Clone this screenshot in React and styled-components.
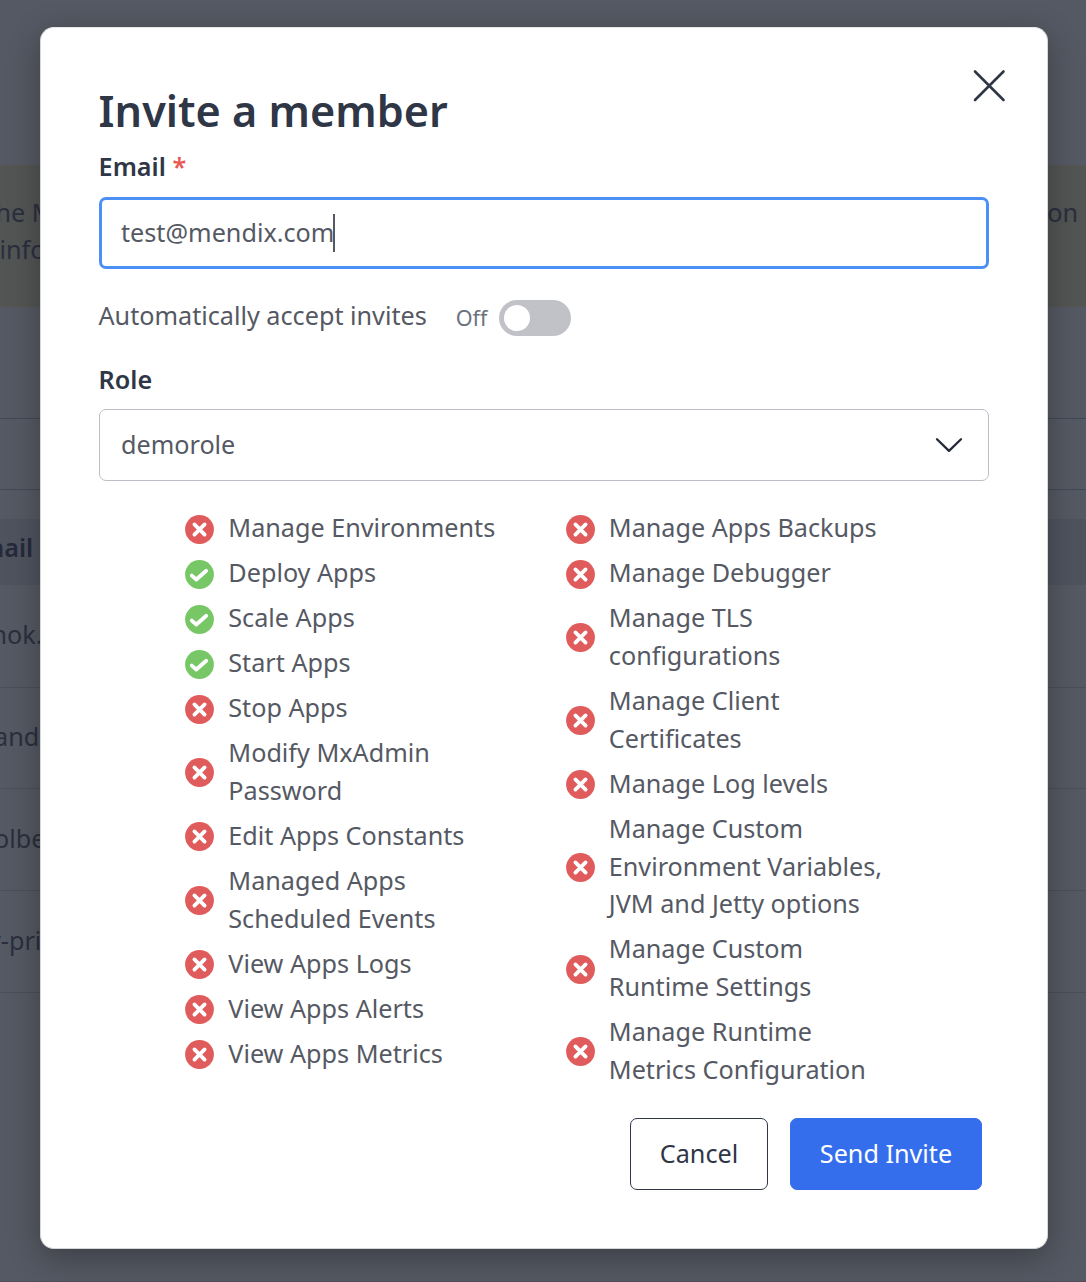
import React from "react";
import styled, { createGlobalStyle } from "styled-components";

const Global = createGlobalStyle`
  *, *::before, *::after { box-sizing: border-box; }
  html, body { margin: 0; padding: 0; background: #555963; }
  body {
    font-family: "Noto Sans", "Open Sans", sans-serif;
    font-size: 25.2px;
    line-height: 37.8px;
    color: #555963;
    overflow: hidden;
  }
`;

const Screen = styled.div`
  position: relative;
  height: 1282px;
  overflow: hidden;
`;

/* Dimmed page behind the dialog */
const Page = styled.div`
  display: flex;
  flex-direction: column;
  height: 100%;
  padding-top: 165px;
  background: #555963;
  border-bottom: 1px solid #524e5c;
  color: #2a2f3e;
  white-space: nowrap;
`;

const Notice = styled.div`
  height: 142px;
  padding-top: 28px;
  background: #535454;
  border-top: 1px solid #56574f;
  border-bottom: 1px solid #56574f;
`;

const NoticeLine = styled.div`
  display: flex;
  justify-content: space-between;
  height: 37px;
  padding-right: 8px;
  margin-left: ${(p) => p.$shift}px;
`;

const FilterBar = styled.div`
  height: 72px;
  margin: 111px 0 29px;
  border-top: 1px solid #434857;
  border-bottom: 1px solid #434857;
`;

const HeadRow = styled.div`
  display: flex;
  align-items: center;
  height: 66px;
  margin-bottom: 1px;
  padding-bottom: 9px;
  background: #4f535e;
  color: #252a3b;
  font-weight: 600;
`;

const Row = styled.div`
  display: flex;
  align-items: center;
  height: 101.7px;
  padding-bottom: 2px;
  border-bottom: 1px solid #4b4f5a;
`;

const Cell = styled.span`
  margin-left: ${(p) => p.$shift}px;
`;

const Dialog = styled.section`
  position: absolute;
  top: 27px;
  left: 40px;
  width: 1008px;
  height: 1222px;
  padding: 54px 58px 0;
  background: #fff;
  border: 1px solid #d5d6da;
  border-top-color: #e6e7e9;
  border-radius: 14px;
  box-shadow: 0 9px 32px rgba(0, 0, 0, 0.3);
`;

const CloseButton = styled.button`
  position: absolute;
  top: 40px;
  right: 40px;
  width: 36px;
  height: 36px;
  padding: 0;
  border: 0;
  background: none;
  svg { display: block; }
`;

const Title = styled.h1`
  margin: 0 0 8px -0.4px;
  height: 58px;
  font-size: 43.2px;
  line-height: 58px;
  font-weight: 600;
  color: #2f3646;
`;

const Label = styled.label`
  display: block;
  height: 38px;
  margin-left: -0.4px;
  font-weight: 600;
  color: #2f3646;
`;

const Required = styled.span`
  color: #e85752;
`;

const EmailField = styled.div`
  display: flex;
  align-items: center;
  height: 72px;
  margin: 11px 0 28px;
  padding: 0 19px 1px;
  border: 3px solid #4a90f5;
  border-radius: 7px;
`;

const Caret = styled.span`
  width: 2px;
  height: 38px;
  margin-left: -1px;
  background: #555963;
`;

const ToggleRow = styled.div`
  display: flex;
  height: 38px;
  margin: 0 0 26px -0.5px;
`;

const ToggleState = styled.span`
  margin: 2px 11.5px 0 29px;
  font-size: 21.6px;
  color: #6c717e;
`;

const Switch = styled.span`
  display: flex;
  width: 72px;
  height: 36px;
  margin-top: 3px;
  padding: 5px;
  border-radius: 18px;
  background: #c1c2c8;
`;

const Knob = styled.span`
  width: 26px;
  height: 26px;
  border-radius: 50%;
  background: #fff;
`;

const Select = styled.div`
  display: flex;
  align-items: center;
  justify-content: space-between;
  height: 72px;
  margin-top: 10px;
  padding: 0 25px 1px 21px;
  border: 1px solid #bdbec5;
  border-radius: 7px;
  svg { margin-top: 1px; }
`;

const Permissions = styled.div`
  display: flex;
  height: 607px;
  padding: 28.2px 0 0 86px;
`;

const Column = styled.ul`
  display: flex;
  flex-direction: column;
  gap: 7.2px;
  width: 380.5px;
  margin: 0;
  padding: 0;
  list-style: none;
`;

const Item = styled.li`
  display: flex;
  align-items: center;
  gap: 14.3px;
  svg {
    flex: none;
    margin-top: 2px;
  }
`;

const ItemText = styled.span`
  width: 280px;
  white-space: pre-line;
`;

const Actions = styled.footer`
  display: flex;
  justify-content: flex-end;
  gap: 22px;
  padding: 30px 7px 0 0;
`;

const Button = styled.button`
  width: ${(p) => p.$width}px;
  height: 72px;
  padding: 0 0 1px;
  border: 1px solid ${(p) => (p.$primary ? "#356eec" : "#2f3646")};
  border-radius: 7px;
  background: ${(p) => (p.$primary ? "#356eec" : "#fff")};
  color: ${(p) => (p.$primary ? "#fff" : "#2f3646")};
  font: inherit;
  font-weight: 400;
`;

const leftColumn = [
  ["Manage Environments", false],
  ["Deploy Apps", true],
  ["Scale Apps", true],
  ["Start Apps", true],
  ["Stop Apps", false],
  ["Modify MxAdmin\nPassword", false],
  ["Edit Apps Constants", false],
  ["Managed Apps\nScheduled Events", false],
  ["View Apps Logs", false],
  ["View Apps Alerts", false],
  ["View Apps Metrics", false],
];

const rightColumn = [
  ["Manage Apps Backups", false],
  ["Manage Debugger", false],
  ["Manage TLS\nconfigurations", false],
  ["Manage Client\nCertificates", false],
  ["Manage Log levels", false],
  ["Manage Custom\nEnvironment Variables,\nJVM and Jetty options", false],
  ["Manage Custom\nRuntime Settings", false],
  ["Manage Runtime\nMetrics Configuration", false],
];

function StatusIcon({ allowed }) {
  return (
    <svg width="29" height="29" viewBox="0 0 29 29" fill="none">
      <circle cx="14.5" cy="14.5" r="14.4" fill={allowed ? "#78c766" : "#e05b5b"} />
      <path
        d={allowed ? "M6.8 15.6l4.5 3.9L21.2 10.8" : "M9.4 9.4l10.2 10.2M19.6 9.4L9.4 19.6"}
        stroke="#fff"
        strokeWidth="3.8"
        strokeLinecap="round"
        strokeLinejoin="round"
      />
    </svg>
  );
}

function PermissionColumn({ items }) {
  return (
    <Column>
      {items.map(([name, allowed]) => (
        <Item key={name}>
          <StatusIcon allowed={allowed} />
          <ItemText>{name}</ItemText>
        </Item>
      ))}
    </Column>
  );
}

export default function App() {
  return (
    <Screen>
      <Global />
      <Page>
        <Notice>
          <NoticeLine $shift={-4.5}><span>he M</span><span>on</span></NoticeLine>
          <NoticeLine $shift={-0.5}><span>info</span></NoticeLine>
        </Notice>
        <FilterBar />
        <HeadRow><Cell $shift={-20}>mail</Cell></HeadRow>
        <Row><Cell $shift={-8.5}>nok.</Cell></Row>
        <Row><Cell $shift={-6}>and</Cell></Row>
        <Row><Cell $shift={-6}>olbe</Cell></Row>
        <Row><Cell $shift={-12}>y-pri</Cell></Row>
      </Page>
      <Dialog role="dialog" aria-label="Invite a member">
        <CloseButton aria-label="Close">
          <svg width="36" height="36" viewBox="0 0 36 36" fill="none" stroke="#2f3646" strokeWidth="2.6" strokeLinecap="round">
            <path d="M4 3.5l28.5 28.5M32.5 3.5L4 32" />
          </svg>
        </CloseButton>
        <Title>Invite a member</Title>
        <Label>Email <Required>*</Required></Label>
        <EmailField>test@mendix.com<Caret /></EmailField>
        <ToggleRow>
          <span>Automatically accept invites</span>
          <ToggleState>Off</ToggleState>
          <Switch><Knob /></Switch>
        </ToggleRow>
        <Label>Role</Label>
        <Select>
          demorole
          <svg width="28" height="18" viewBox="0 0 28 18" fill="none" stroke="#252a3b" strokeWidth="2.3" strokeLinecap="round" strokeLinejoin="round">
            <path d="M2 3.2l12 11.7L26 3.2" />
          </svg>
        </Select>
        <Permissions>
          <PermissionColumn items={leftColumn} />
          <PermissionColumn items={rightColumn} />
        </Permissions>
        <Actions>
          <Button $width={138}>Cancel</Button>
          <Button $width={192} $primary>Send Invite</Button>
        </Actions>
      </Dialog>
    </Screen>
  );
}
